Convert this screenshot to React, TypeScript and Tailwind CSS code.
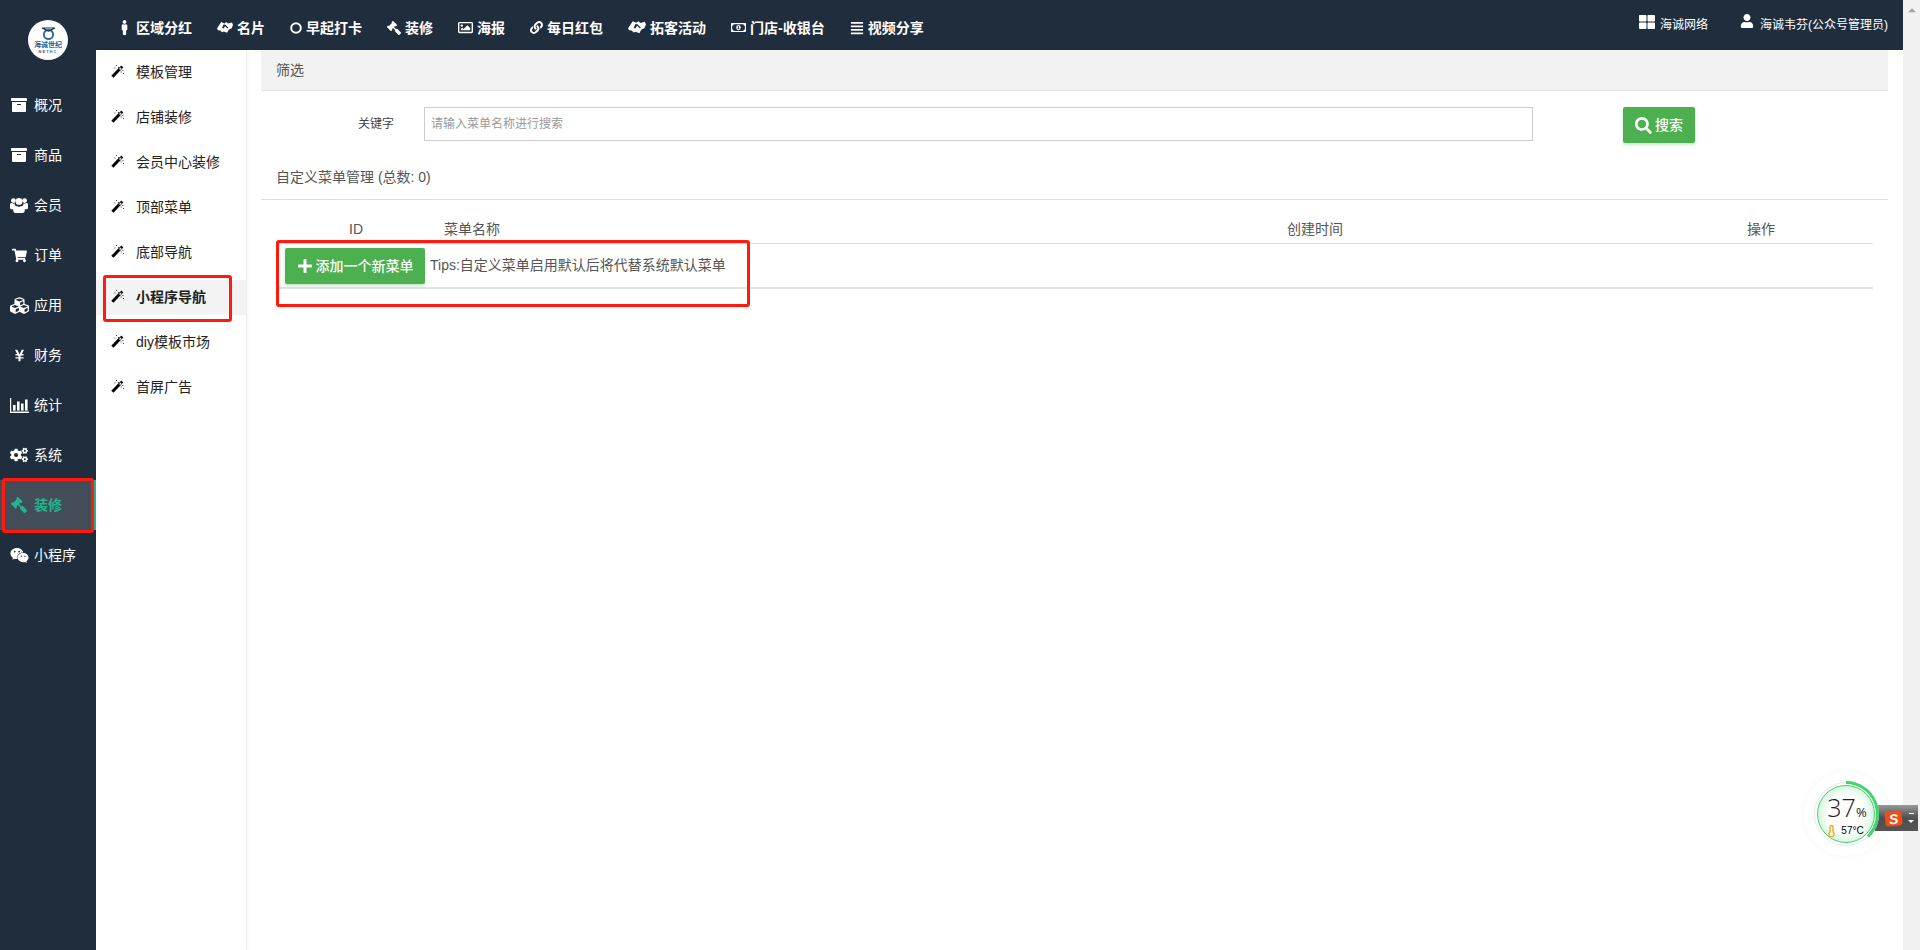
import type { ReactNode } from 'react'
import {
  FaArchive,
  FaShoppingCart,
  FaCubes,
  FaYenSign,
  FaCogs,
  FaGavel,
  FaWeixin,
  FaMale,
  FaRegImage,
  FaLink,
  FaRegMoneyBillAlt,
  FaAlignJustify,
  FaThLarge,
  FaUser,
  FaSearch,
  FaPlus,
  FaCaretUp,
} from 'react-icons/fa'

const font = { fontFamily: '"Liberation Sans", "Noto Sans CJK SC", sans-serif' }

// fa-bar-chart из FA4, в react-icons такого нет
function BarChartIcon() {
  return (
    <svg width="19" height="15" viewBox="0 0 19 15" fill="currentColor">
      <path d="M0 0h1.2v13.6H19V15H0z" />
      <rect x="3" y="7" width="2.6" height="5.6" />
      <rect x="7" y="3.5" width="2.6" height="9.1" />
      <rect x="11" y="5.5" width="2.6" height="7.1" />
      <rect x="15" y="1.5" width="2.6" height="11.1" />
    </svg>
  )
}

function UsersIcon() {
  return (
    <svg width="18" height="16" viewBox="0 0 18 16" fill="currentColor">
      <circle cx="3.4" cy="3.6" r="2.4" />
      <circle cx="14.6" cy="3.6" r="2.4" />
      <circle cx="9" cy="4.4" r="3.4" />
      <path d="M0 7.4c0-1 1-1.6 1.6-1.4.8.5 2 .6 3 .2-.2 1.4.4 2.6 1.2 3.2-1 .6-1.8 1.6-2.1 2.8H1.2C.4 12.2 0 11.6 0 10.8zM18 7.4c0-1-1-1.6-1.6-1.4-.8.5-2 .6-3 .2.2 1.4-.4 2.6-1.2 3.2 1 .6 1.8 1.6 2.1 2.8h2.5c.8 0 1.2-.6 1.2-1.4z" />
      <path d="M5.2 8.6c1 1.4 6.6 1.4 7.6 0 1.2.4 2 2 2 4.6 0 1.6-.8 2.8-2.2 2.8H5.4c-1.4 0-2.2-1.2-2.2-2.8 0-2.6.8-4.2 2-4.6z" />
    </svg>
  )
}

function HandshakeIcon({ width = 16 }: { width?: number }) {
  return (
    <svg width={width} height={(width * 13) / 16} viewBox="0 0 16 13" fill="currentColor">
      <path d="M0 7.5 4.2 1l3.2 1.4L9.2 1l1.8 1.6L15 1.6 16 4l-1.5 3.4-2.6 1-1.8 3.4-3.4-1.4-1.6.8L3.2 9.4 1 9.2z" />
      <path d="M6.6 3.6 5 7l1.6.6L8 5.2l2.6 2.4.8-.8L8.4 3.8z" fill="#1f2d3d" />
    </svg>
  )
}

function CircleIcon() {
  return (
    <svg width="12" height="12" viewBox="0 0 12 12" fill="none" stroke="currentColor" strokeWidth="2">
      <circle cx="6" cy="6" r="4.8" />
    </svg>
  )
}

// fa-magic: чёрная палочка с белым кончиком и искрами
function WandIcon() {
  return (
    <svg width="13" height="13" viewBox="0 0 13 13">
      <path d="M1.4 11.8 9 3.8" stroke="#000" strokeWidth="3" />
      <path d="M9 3.8 11.4 1.4" stroke="#111" strokeWidth="2.8" />
      <path d="M8.6 4.6 10 3" stroke="#e8e8e8" strokeWidth="1.4" />
      <path d="M5 0h1v1H5zM7 2h1v1H7zM3.4 2.4h1v1h-1zM11.4 5h1v1h-1zM12 8h1v1h-1zM9.6 6.4h1v1h-1z" fill="#444" />
    </svg>
  )
}

const sideItems: { label: string; icon: ReactNode; active?: boolean }[] = [
  { label: '概况', icon: <FaArchive size={16} /> },
  { label: '商品', icon: <FaArchive size={16} /> },
  { label: '会员', icon: <UsersIcon /> },
  { label: '订单', icon: <FaShoppingCart size={15} /> },
  { label: '应用', icon: <FaCubes size={19} /> },
  { label: '财务', icon: <FaYenSign size={13} /> },
  { label: '统计', icon: <BarChartIcon /> },
  { label: '系统', icon: <FaCogs size={18} /> },
  { label: '装修', icon: <FaGavel size={16} className="-scale-x-100" />, active: true },
  { label: '小程序', icon: <FaWeixin size={19} /> },
]

const topItems: { label: string; icon: ReactNode }[] = [
  { label: '区域分红', icon: <FaMale size={15} /> },
  { label: '名片', icon: <HandshakeIcon /> },
  { label: '早起打卡', icon: <CircleIcon /> },
  { label: '装修', icon: <FaGavel size={14} className="-scale-x-100" /> },
  { label: '海报', icon: <FaRegImage size={15} /> },
  { label: '每日红包', icon: <FaLink size={13} /> },
  { label: '拓客活动', icon: <HandshakeIcon width={18} /> },
  { label: '门店-收银台', icon: <FaRegMoneyBillAlt size={15} /> },
  { label: '视频分享', icon: <FaAlignJustify size={14} /> },
]

const subItems = ['模板管理', '店铺装修', '会员中心装修', '顶部菜单', '底部导航', '小程序导航', 'diy模板市场', '首屏广告']

function Logo() {
  return (
    <div className="flex h-10 w-10 flex-col items-center justify-center rounded-full bg-white">
      <svg width="15" height="14" viewBox="0 0 15 14" fill="none" stroke="#2f6ea5" strokeWidth="2">
        <circle cx="7.5" cy="7.5" r="4.6" />
        <path d="M1 1h13L7.5 4z" strokeWidth="1.2" stroke="#17324f" />
      </svg>
      <span className="text-[7px] leading-[8px] font-bold text-[#2b5f8f]">海诚世纪</span>
      <span className="text-[4px] leading-[5px] font-bold tracking-[1px] text-[#2b5f8f]">NETHC</span>
    </div>
  )
}

function Sidebar() {
  return (
    <aside className="w-24 shrink-0 bg-[#1f2d3d]">
      <div className="flex h-20 items-center justify-center">
        <Logo />
      </div>
      {sideItems.map((item) => (
        <div
          key={item.label}
          className={`flex h-[50px] items-center text-sm ${
            item.active
              ? 'border-r-[3px] border-[#26b28f] bg-[#434d5a] font-bold text-[#26b28f]'
              : 'text-white'
          }`}
        >
          <span className="flex w-[34px] justify-center pl-[4px]">{item.icon}</span>
          {item.label}
        </div>
      ))}
    </aside>
  )
}

function TopBar() {
  return (
    <header className="flex h-[50px] shrink-0 bg-[#1f2d3d] text-white">
      <nav className="flex items-center gap-[25px] pt-[5px] pl-[21px] text-sm font-bold">
        {topItems.map((item) => (
          <div key={item.label} className="flex items-center gap-1">
            {item.icon}
            {item.label}
          </div>
        ))}
      </nav>
      <div className="ml-auto flex items-start gap-8 pt-[14px] pr-[15px] text-xs">
        <div className="flex items-start gap-[5px]">
          <FaThLarge size={16} />
          <span className="pt-[3px]">海诚网络</span>
        </div>
        <div className="flex items-start gap-[6px]">
          <FaUser size={14} />
          <span className="pt-[3px]">海诚韦芬(公众号管理员)</span>
        </div>
      </div>
    </header>
  )
}

function SubNav() {
  return (
    <div className="w-[151px] shrink-0 border-r border-[#eeeeee] bg-white pt-[5px] shadow-[2px_0_4px_rgba(0,0,0,0.03)]">
      {subItems.map((label) => (
        <div
          key={label}
          className={`mb-[10px] flex h-[35px] items-center pb-[2px] text-sm text-[#222] ${label === '小程序导航' ? 'bg-[#f3f3f4] font-bold' : ''}`}
        >
          <span className="flex w-10 justify-center pl-[2px]">
            <WandIcon />
          </span>
          {label}
        </div>
      ))}
    </div>
  )
}

function Content() {
  return (
    <main className="flex-1 pr-[15px] pl-[14px] text-[#555]">
      <div className="flex h-[41px] items-center border-b border-[#e0e0e0] bg-[#f2f2f2] pl-[15px] text-sm">筛选</div>

      <div className="mt-[16px] flex">
        <label className="w-[163px] pt-[9px] pr-[30px] text-right text-xs leading-4 text-[#444]">关键字</label>
        <input
          placeholder="请输入菜单名称进行搜索"
          className="h-[34px] w-[1109px] border border-[#cccccc] bg-white px-[6px] text-xs placeholder:text-[#999]"
        />
        <button className="ml-[90px] flex h-9 w-[72px] items-center justify-center gap-[3px] rounded-[2px] bg-[#4caf50] text-sm font-medium text-white shadow-[0_2px_3px_rgba(76,175,80,0.3)]">
          <FaSearch size={17} />
          搜索
        </button>
      </div>

      <div className="mt-[20px] h-[37px] border-b border-[#dddddd] pt-[3px] pl-[15px] text-sm leading-[22px]">
        自定义菜单管理 (总数: 0)
      </div>

      <div className="mx-[15px] mt-[19px]">
        <div className="flex h-[25px] items-start border-b border-[#dddddd] text-sm leading-[20px]">
          <span className="w-[168px] pl-[73px]">ID</span>
          <span className="w-[843px]">菜单名称</span>
          <span className="w-[460px]">创建时间</span>
          <span>操作</span>
        </div>
        <div className="flex h-[45px] items-start border-b-2 border-[#e2e2e2] pt-[4px] pl-[9px] text-sm">
          <button className="flex h-9 w-[140px] items-center justify-center gap-[3px] rounded-[2px] bg-[#4caf50] font-medium text-white shadow-[0_2px_3px_rgba(76,175,80,0.3)]">
            <FaPlus size={16} />
            添加一个新菜单
          </button>
          <span className="ml-[5px] leading-[35px]">Tips:自定义菜单启用默认后将代替系统默认菜单</span>
        </div>
      </div>
    </main>
  )
}

// виджет температуры и панель Sogou поверх страницы
function SystemWidget() {
  return (
    <div className="absolute top-[772px] right-[2px] flex items-start">
      <div className="relative z-10 h-[84px] w-[84px] rounded-full shadow-[0_0_8px_rgba(0,0,0,0.04)]">
        <svg width="84" height="84" viewBox="0 0 84 84" className="absolute inset-0">
          <defs>
            <radialGradient id="glow" cx="50%" cy="50%" r="50%">
              <stop offset="65%" stopColor="#ffffff" />
              <stop offset="100%" stopColor="#d6f6de" />
            </radialGradient>
          </defs>
          <circle cx="42" cy="42" r="33" fill="#ffffff" />
          <circle cx="42" cy="42" r="28.5" fill="url(#glow)" stroke="#3fd46c" strokeWidth="1" />
          <circle cx="42" cy="42" r="31.5" fill="none" stroke="#e9e9e9" strokeWidth="1" />
          <path d="M42 10.5 A31.5 31.5 0 0 1 64 64.5" fill="none" stroke="#3fd46c" strokeWidth="3" />
        </svg>
        <div className="absolute inset-0 flex flex-col items-center justify-center pt-[2px] text-[#222]">
          <div className="flex items-baseline pl-[2px] leading-[26px]">
            <span className="font-['Open_Sans'] text-[25px] font-light">37</span>
            <span className="font-['Open_Sans'] text-[13px]">%</span>
          </div>
          <div className="flex items-center gap-[6px] text-[10px] leading-3 text-black">
            <svg width="7" height="12" viewBox="0 0 7 12" fill="none" stroke="#f5a623" strokeWidth="1.4">
              <path d="M2 2a1.5 1.5 0 0 1 3 0v5a2.6 2.6 0 1 1-3 0z" />
            </svg>
            57°C
          </div>
        </div>
      </div>
      <div className="mt-[33px] -ml-[13px] flex h-[26px] w-[43px] items-center justify-end gap-[6px] bg-gradient-to-b from-[#9a9a9a] via-[#4f4f4f] to-[#555555] pr-[4px]">
        <span className="flex h-[15px] w-[17px] -rotate-6 items-center justify-center rounded-[3px] bg-[#f04e16] text-[14px] leading-none font-bold text-white italic">
          S
        </span>
        <span className="flex flex-col items-center gap-[6px]">
          <span className="h-px w-[5px] bg-white" />
          <span className="h-0 w-0 border-x-[3px] border-t-[3px] border-x-transparent border-t-white" />
        </span>
      </div>
    </div>
  )
}

export default function App() {
  return (
    <div className="relative flex h-[950px] overflow-hidden bg-white" style={font}>
      <Sidebar />
      <div className="flex flex-1 flex-col">
        <TopBar />
        <div className="flex flex-1">
          <SubNav />
          <Content />
        </div>
      </div>
      <div className="flex w-[17px] shrink-0 justify-center bg-[#f1f1f1] pt-[4px] text-[#a3a3a3]">
        <FaCaretUp size={12} />
      </div>

      {/* красные рамки-пометки на скриншоте */}
      <div className="absolute top-[478px] left-[2px] h-[55px] w-[92px] rounded-[3px] border-[3px] border-[#ff1a0d]" />
      <div className="absolute top-[275px] left-[103px] h-[47px] w-[129px] rounded-[3px] border-[3px] border-[#ff1a0d]" />
      <div className="absolute top-[240px] left-[276px] h-[67px] w-[474px] rounded-[3px] border-[3px] border-[#ff1a0d]" />

      <SystemWidget />
    </div>
  )
}
